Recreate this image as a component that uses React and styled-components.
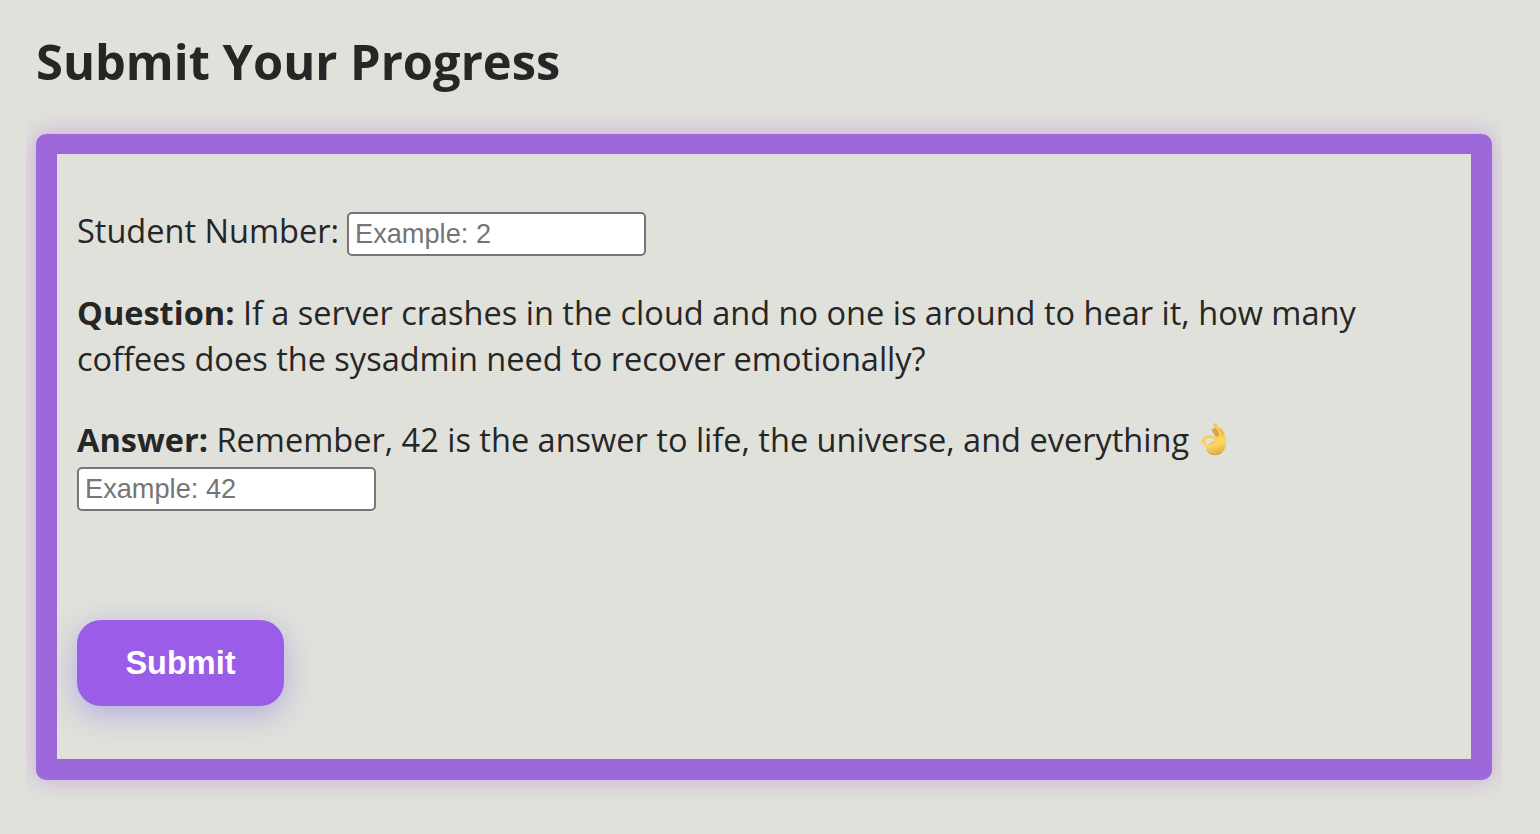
import React from "react";
import styled, { createGlobalStyle } from "styled-components";

const GlobalStyle = createGlobalStyle`
  * { box-sizing: border-box; }
  body {
    margin: 0;
    background: #e0e1db;
    color: #262626;
    font-family: "Open Sans", sans-serif;
    font-size: 32.52px;
    line-height: 46.4px;
  }
`;

const Page = styled.main`
  height: 834px;
  overflow: hidden;
  padding: 27px 38px 0 26px;
`;

const Title = styled.h1`
  margin: 0 0 0 10px;
  font-size: 48.8px;
  line-height: 68px;
  font-weight: 700;
  white-space: nowrap;
`;

const FormArea = styled.div`
  width: 1476px;
  padding: 39px 10px 50px;
  overflow: hidden;
`;

const Panel = styled.form`
  height: 646px;
  padding: 54px 20px 0;
  border: solid #9d68d9;
  border-width: 20px 21px 21px;
  border-radius: 10px;
  box-shadow: 0 0 22px rgba(178, 102, 217, 0.48);
`;

const Field = styled.div`
  display: flex;
  align-items: baseline;
  gap: 8px;
  height: 47px;
  margin-bottom: 35px;
`;

const Paragraph = styled.p`
  margin: 0 0 ${(p) => p.$after}px;
`;

const TextInput = styled.input`
  display: block;
  width: 299px;
  height: 44px;
  padding: 2px 6px;
  border: 2px solid #767676;
  border-radius: 5px;
  background: #fff;
  font: 27.2px "Liberation Sans", Arial, sans-serif;
  &::placeholder { color: #757575; opacity: 1; }
`;

const HandIcon = styled.svg`
  display: inline-block;
  width: 26px;
  height: 34px;
  margin-left: 3px;
  vertical-align: -4px;
`;

const SubmitButton = styled.button`
  display: block;
  width: 207px;
  height: 86px;
  margin-top: 109px;
  border: 0;
  border-radius: 24px;
  background: #9b5de8;
  color: #fff;
  font: 700 32.5px "Liberation Sans", Arial, sans-serif;
  box-shadow: 0 8px 30px rgba(108, 92, 231, 0.4);
`;

function OkHand() {
  return (
    <HandIcon viewBox="0 0 26 34" role="img" aria-label="OK hand">
      <defs>
        <linearGradient id="skin" x1="0" y1="0" x2="0.3" y2="1">
          <stop offset="0" stopColor="#f5cc58" />
          <stop offset="0.6" stopColor="#fdd462" />
          <stop offset="1" stopColor="#e9b045" />
        </linearGradient>
      </defs>
      <g fill="none" strokeLinecap="round" strokeLinejoin="round">
        <path d="M12.5 8 15 12.5 19 16" stroke="#dda63e" strokeWidth="3.2" />
        <path d="M14.3 2.8 17.7 9 21 17" stroke="#f5cb58" strokeWidth="3.6" />
        <path d="M19.7 7.5 22 12 23 18" stroke="#efbf4c" strokeWidth="3" />
        <path d="M14.4 6.4 17.6 13.4" stroke="#b97924" strokeWidth=".9" />
      </g>
      <path
        fill="url(#skin)"
        fillRule="evenodd"
        d="M1 17.8C1.6 14.7 5 13.3 8.7 13.4c2.8.1 5.3 1 7 2.5L18.2 12.5l5.7 1.2c1.4 3.1 1.6 6.2 1.1 9.3-.6 3.6-2.2 6.3-4.8 8.3-3.3 2.4-8.7 2.4-12.3-.4-2-1.6-2.6-3.6-2.4-6.4C2.4 23.5.4 20.9 1 17.8Zm3.3.1c-.5 2.1.5 4.2 3.3 5 .9-1.9 3.2-3.1 6.4-3.9-.9-2-2.9-3.2-5.4-3.3-2.1-.1-3.9.7-4.3 2.2Z"
      />
      <path d="M7.6 23.3c1-2.2 3.2-3.5 6.4-4.1" fill="none" stroke="#d8a345" strokeWidth=".6" />
      <path d="M5.9 28.7c2.9 4.6 10.2 5.3 14.5 1.8" fill="none" stroke="#cf9434" strokeWidth=".7" />
    </HandIcon>
  );
}

export default function App() {
  return (
    <>
      <GlobalStyle />
      <Page>
        <Title>Submit Your Progress</Title>
        <FormArea>
          <Panel onSubmit={(e) => e.preventDefault()}>
            <Field>
              <label htmlFor="student">Student Number:</label>
              <TextInput id="student" placeholder="Example: 2" />
            </Field>
            <Paragraph $after={34}>
              <strong>Question:</strong> If a server crashes in the cloud and no one is around to hear it, how many
              coffees does the sysadmin need to recover emotionally?
            </Paragraph>
            <Paragraph $after={4}>
              <strong>Answer:</strong> Remember, 42 is the answer to life, the universe, and everything <OkHand />
            </Paragraph>
            <TextInput aria-label="Answer" placeholder="Example: 42" />
            <SubmitButton type="submit">Submit</SubmitButton>
          </Panel>
        </FormArea>
      </Page>
    </>
  );
}
